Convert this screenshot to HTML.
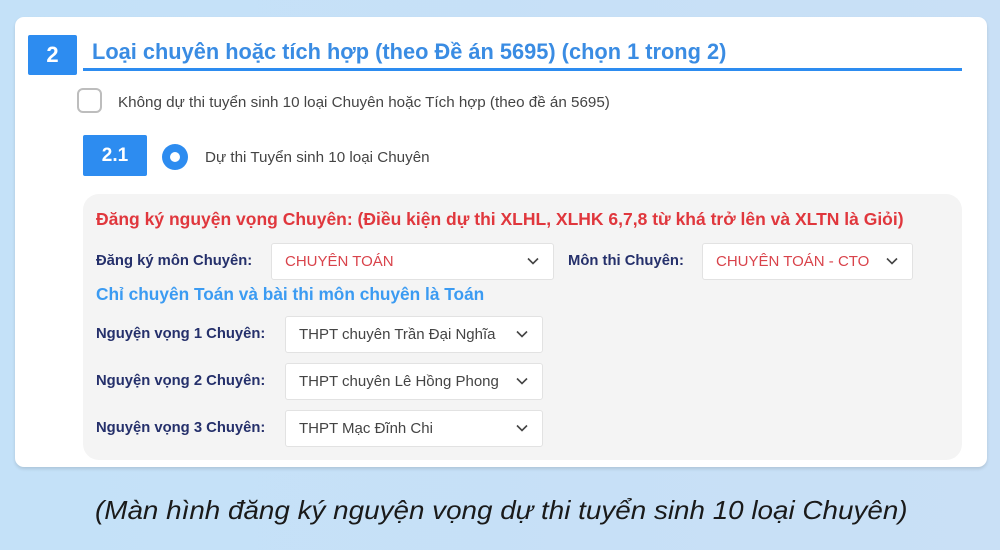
<!DOCTYPE html>
<html><head><meta charset="utf-8"><style>
*{margin:0;padding:0;box-sizing:border-box}
body{width:1000px;height:550px;background:linear-gradient(90deg,#c4e1f8,#c9e0f6);font-family:"Liberation Sans",sans-serif;position:relative;overflow:hidden}
.a{position:absolute}
.card{left:15px;top:17px;width:972px;height:450px;background:#fff;border-radius:9px;box-shadow:0 2px 3px rgba(0,0,0,.12)}
.box{background:#2d8cf0;color:#fff;font-weight:bold;display:flex;align-items:center;justify-content:center;border-radius:2px}
.t{white-space:nowrap}
.sel{background:#fff;border:1px solid #e2e2e2;border-radius:3px;font-size:15px;display:flex;align-items:center;padding-left:13px;white-space:nowrap}
.sel svg{position:absolute;right:14px;top:13px}
.lbl{font-size:14.8px;font-weight:bold;color:#25306b;white-space:nowrap}
</style></head><body>
<div class="a card"></div>
<div class="a box" style="left:28px;top:35px;width:49px;height:40px;font-size:22px">2</div>
<div class="a t" style="left:92px;top:39px;font-size:21.8px;font-weight:bold;color:#3a8ce3">Loại chuyên hoặc tích hợp (theo Đề án 5695) (chọn 1 trong 2)</div>
<div class="a" style="left:83px;top:68px;width:879px;height:3px;background:#2d8cf0"></div>
<div class="a" style="left:77px;top:88px;width:25px;height:25px;border:2px solid #bdbdbd;border-radius:6px"></div>
<div class="a t" style="left:118px;top:94px;font-size:15.2px;color:#444">Không dự thi tuyển sinh 10 loại Chuyên hoặc Tích hợp (theo đề án 5695)</div>
<div class="a box" style="left:83px;top:135px;width:64px;height:41px;font-size:19px">2.1</div>
<div class="a" style="left:162px;top:144px;width:26px;height:26px;border-radius:50%;background:#2d8cf0"></div>
<div class="a" style="left:170px;top:152px;width:10px;height:10px;border-radius:50%;background:#fff"></div>
<div class="a t" style="left:205px;top:149px;font-size:15.2px;color:#444">Dự thi Tuyển sinh 10 loại Chuyên</div>
<div class="a" style="left:83px;top:194px;width:879px;height:266px;background:#f4f4f4;border-radius:16px"></div>
<div class="a t" style="left:96px;top:209px;font-size:17.5px;font-weight:bold;color:#e0373d">Đăng ký nguyện vọng Chuyên: (Điều kiện dự thi XLHL, XLHK 6,7,8 từ khá trở lên và XLTN là Giỏi)</div>
<div class="a lbl" style="left:96px;top:253px">Đăng ký môn Chuyên:</div>
<div class="a sel" style="left:271px;top:243px;width:283px;height:37px;color:#d9434b">CHUYÊN TOÁN<svg width="12" height="8" viewBox="0 0 12 8"><path d="M1 1.5l5 5 5-5" fill="none" stroke="#444" stroke-width="1.6"/></svg></div>
<div class="a lbl" style="left:568px;top:253px">Môn thi Chuyên:</div>
<div class="a sel" style="left:702px;top:243px;width:211px;height:37px;color:#d9434b">CHUYÊN TOÁN - CTO<svg width="12" height="8" viewBox="0 0 12 8"><path d="M1 1.5l5 5 5-5" fill="none" stroke="#444" stroke-width="1.6"/></svg></div>
<div class="a t" style="left:96px;top:284px;font-size:17.3px;font-weight:bold;color:#3b9bf2">Chỉ chuyên Toán và bài thi môn chuyên là Toán</div>
<div class="a lbl" style="left:96px;top:326px">Nguyện vọng 1 Chuyên:</div>
<div class="a sel" style="left:285px;top:316px;width:258px;height:37px;color:#444">THPT chuyên Trần Đại Nghĩa<svg width="12" height="8" viewBox="0 0 12 8"><path d="M1 1.5l5 5 5-5" fill="none" stroke="#444" stroke-width="1.6"/></svg></div>
<div class="a lbl" style="left:96px;top:373px">Nguyện vọng 2 Chuyên:</div>
<div class="a sel" style="left:285px;top:363px;width:258px;height:37px;color:#444">THPT chuyên Lê Hồng Phong<svg width="12" height="8" viewBox="0 0 12 8"><path d="M1 1.5l5 5 5-5" fill="none" stroke="#444" stroke-width="1.6"/></svg></div>
<div class="a lbl" style="left:96px;top:420px">Nguyện vọng 3 Chuyên:</div>
<div class="a sel" style="left:285px;top:410px;width:258px;height:37px;color:#444">THPT Mạc Đĩnh Chi<svg width="12" height="8" viewBox="0 0 12 8"><path d="M1 1.5l5 5 5-5" fill="none" stroke="#444" stroke-width="1.6"/></svg></div>
<div class="a t" style="left:95px;top:495px;font-size:26px;font-style:italic;color:#1a1a1a;transform:scaleX(1.07);transform-origin:left top">(Màn hình đăng ký nguyện vọng dự thi tuyển sinh 10 loại Chuyên)</div>
</body></html>
